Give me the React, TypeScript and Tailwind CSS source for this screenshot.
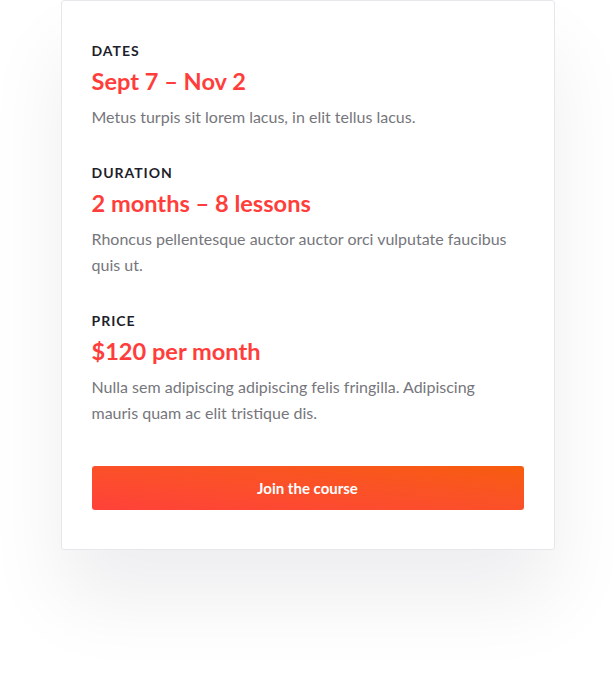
export default function App() {
  const sections = [
    { label: 'Dates', title: 'Sept 7 – Nov 2', text: 'Metus turpis sit lorem lacus, in elit tellus lacus.' },
    { label: 'Duration', title: '2 months – 8 lessons', text: 'Rhoncus pellentesque auctor auctor orci vulputate faucibus quis ut.' },
    { label: 'Price', title: '$120 per month', text: 'Nulla sem adipiscing adipiscing felis fringilla. Adipiscing mauris quam ac elit tristique dis.' },
  ];

  return (
    <div className="min-h-[690px] bg-white font-['Lato','Liberation_Sans',sans-serif]">
      <div className="mx-auto w-[494px] rounded-[3px] border border-[#e6e7eb] bg-white px-[30px] pt-[42px] pb-[39px] shadow-[0_50px_80px_rgba(20,20,40,0.07)]">
        <div className="flex flex-col gap-[35px]">
          {sections.map((s) => (
            <div key={s.label}>
              <div className="text-[14px] leading-[16px] font-bold uppercase tracking-[0.07em] text-[#1d1f2c]">{s.label}</div>
              <div className="mt-[7px] text-[23.6px] leading-[30px] font-bold text-[#ff3e3b]">{s.title}</div>
              <p className="mt-[8px] text-[16px] leading-[26px] text-[#76767c]">{s.text}</p>
            </div>
          ))}
        </div>
        <button className="mt-[40px] flex h-[44px] w-full items-center justify-center rounded-[3px] bg-gradient-to-tr from-[#ff4139] to-[#f75c0a] text-[15px] font-bold text-white">
          Join the course
        </button>
      </div>
    </div>
  );
}
